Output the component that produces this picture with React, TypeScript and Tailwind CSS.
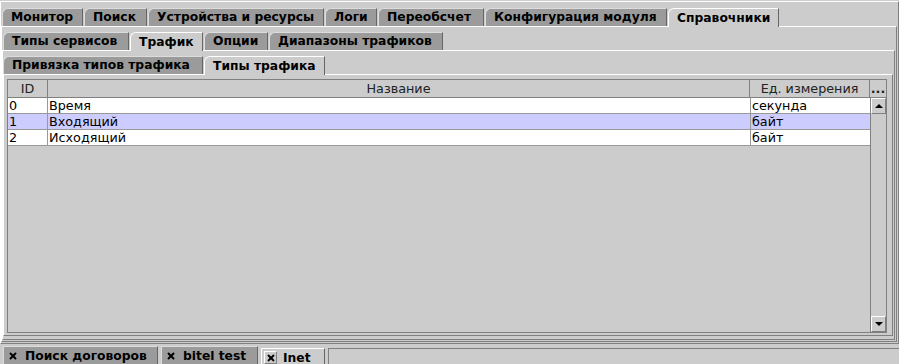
import React from 'react';
import { X } from 'lucide-react';

type TabItem = { label: string; w: string; active?: boolean };

const topTabs: TabItem[] = [
  { label: 'Монитор', w: 'w-[81px]' },
  { label: 'Поиск', w: 'w-[63px]' },
  { label: 'Устройства и ресурсы', w: 'w-[176px]' },
  { label: 'Логи', w: 'w-[52px]' },
  { label: 'Переобсчет', w: 'w-[106px]' },
  { label: 'Конфигурация модуля', w: 'w-[182px]' },
  { label: 'Справочники', w: 'w-[111px]', active: true },
];

const midTabs: TabItem[] = [
  { label: 'Типы сервисов', w: 'w-[126px]' },
  { label: 'Трафик', w: 'w-[73px]', active: true },
  { label: 'Опции', w: 'w-[64px]' },
  { label: 'Диапазоны трафиков', w: 'w-[174px]' },
];

const subTabs: TabItem[] = [
  { label: 'Привязка типов трафика', w: 'w-[200px]' },
  { label: 'Типы трафика', w: 'w-[121px]', active: true },
];

const rows = [
  { id: '0', name: 'Время', unit: 'секунда' },
  { id: '1', name: 'Входящий', unit: 'байт', selected: true },
  { id: '2', name: 'Исходящий', unit: 'байт' },
];

function Tab({ label, w, active }: TabItem) {
  return (
    <div
      className={`${w} flex items-center pl-[8px] text-[12.3px] font-bold text-black whitespace-nowrap border-t border-l border-r rounded-tl-[6px] border-r-[#666666] ${
        active
          ? 'h-[19px] -mb-px relative z-10 bg-[#cccccc] border-t-white border-l-white'
          : 'h-[18px] bg-[#9b9b9b] border-t-[#dcdcdc] border-l-[#dcdcdc]'
      }`}
    >
      {label}
    </div>
  );
}

function TabRow({ tabs, className }: { tabs: TabItem[]; className?: string }) {
  return (
    <div className={`flex items-end gap-px ${className ?? ''}`}>
      {tabs.map((t) => (
        <Tab key={t.label} {...t} />
      ))}
    </div>
  );
}

function ArrowBtn({ up }: { up?: boolean }) {
  return (
    <div className="h-[16px] flex items-center justify-center bg-[#cccccc] border-t border-l border-white border-r border-b border-r-[#808080] border-b-[#808080]">
      <div
        className={`w-0 h-0 border-l-[4px] border-r-[4px] border-transparent ${
          up ? 'border-b-[4px] border-b-black' : 'border-t-[4px] border-t-black'
        }`}
      />
    </div>
  );
}

function BottomTab({ label, w, active }: TabItem) {
  return (
    <div
      className={`${w} flex items-start gap-[6px] pl-[2px] pt-[2px] text-[12.3px] font-bold text-black whitespace-nowrap border-t border-l border-r border-r-[#666666] ${
        active
          ? 'h-[16px] mt-[2px] bg-[#cccccc] border-t-white border-l-white'
          : 'h-[18px] bg-[#9b9b9b] border-t-[#dcdcdc] border-l-[#dcdcdc]'
      }`}
    >
      <span
        className={`flex items-center justify-center w-[13px] h-[13px] ${
          active ? 'border border-t-white border-l-white border-r-[#808080] border-b-[#808080]' : ''
        }`}
      >
        <X size={10} strokeWidth={4.5} color="#000" />
      </span>
      <span className="leading-[14px]">{label}</span>
    </div>
  );
}

export default function App() {
  return (
    <div className="w-[899px] h-[364px] overflow-hidden bg-[#cccccc] font-['DejaVu_Sans',sans-serif] pt-px">
      {/* outer pane */}
      <div className="border-t border-l border-white border-r border-r-[#808080] border-b border-b-[#808080] pt-[6px] pb-px">
        <TabRow tabs={topTabs} className="pl-px" />
        <div className="border-t border-l border-white border-r border-r-[#808080] border-b border-b-[#808080] pt-[5px] pb-px pr-px mr-px">
          <TabRow tabs={midTabs} className="pl-px" />
          <div className="border-t border-l border-white border-r border-r-[#808080] border-b border-b-[#808080] pt-[5px] pb-[3px] pr-px">
            <TabRow tabs={subTabs} />
            <div className="border-t border-l border-white border-r border-r-[#808080] border-b border-b-[#808080] pt-[4px] pb-[2px] pl-[3px] pr-[5px]">
              {/* table */}
              <div className="h-[254px] flex flex-col border border-[#808080] text-[12.75px] text-black">
                <div className="h-[18px] flex border-b border-[#808080] bg-[#cccccc] text-[#222222]">
                  <div className="w-[40px] flex items-center justify-center border-r border-[#808080]">ID</div>
                  <div className="flex-1 flex items-center justify-center border-r border-[#808080]">Название</div>
                  <div className="w-[120px] flex items-center justify-center border-r border-[#808080]">Ед. измерения</div>
                  <div className="w-[16px] flex items-center justify-center font-bold">...</div>
                </div>
                <div className="flex-1 flex">
                  <div className="flex-1 flex flex-col">
                    {rows.map((r) => (
                      <div
                        key={r.id}
                        className={`h-[16px] flex border-b border-[#999999] leading-[15px] ${
                          r.selected ? 'bg-[#ccccff]' : 'bg-white'
                        }`}
                      >
                        <div className="w-[40px] pl-px border-r border-[#999999]">{r.id}</div>
                        <div className="flex-1 pl-px border-r border-[#999999]">{r.name}</div>
                        <div className="w-[119px] pl-px">{r.unit}</div>
                      </div>
                    ))}
                  </div>
                  <div className="w-[16px] flex flex-col border-l border-[#808080] bg-[#cccccc]">
                    <ArrowBtn up />
                    <div className="flex-1" />
                    <ArrowBtn />
                  </div>
                </div>
              </div>
            </div>
          </div>
        </div>
      </div>
      {/* bottom tabs */}
      <div className="mt-[2px] flex items-start gap-[3px] pl-[3px]">
        <BottomTab label="Поиск договоров" w="w-[155px]" />
        <BottomTab label="bitel test" w="w-[97px]" />
        <BottomTab label="Inet" w="w-[64px]" active />
        <div className="flex-1 h-[16px] mt-[2px] border-t border-l border-[#808080]" />
      </div>
    </div>
  );
}
